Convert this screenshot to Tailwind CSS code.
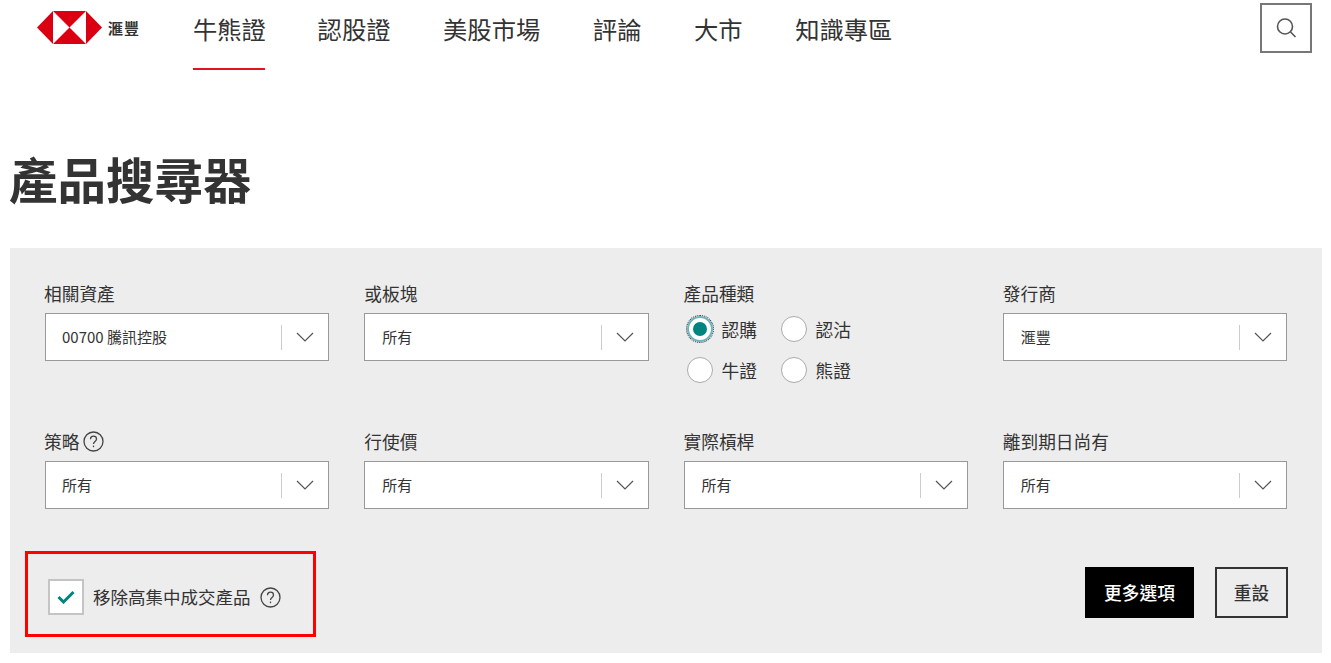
<!DOCTYPE html>
<html lang="zh-Hant">
<head>
  <meta charset="UTF-8" />
  <title>產品搜尋器</title>
  <script src="https://cdn.jsdelivr.net/npm/@tailwindcss/browser@4"></script>
</head>
<body class="bg-white text-[#333] overflow-hidden font-['Noto_Sans_CJK_TC','Liberation_Sans',sans-serif]">
  <!-- header -->
  <header class="h-[70px] flex items-start pl-[37px] pr-[19px]">
    <div class="w-[156px] h-[54px] flex items-center gap-[6px] shrink-0">
      <svg class="w-[65px] h-[33px]" viewBox="0 0 65 33">
        <polygon fill="#db0011" points="0,16.5 16,0 49,0 65,16.5 49,33 16,33" />
        <polygon fill="#fff" points="16,0 32.5,16.5 16,33" />
        <polygon fill="#fff" points="49,0 32.5,16.5 49,33" />
      </svg>
      <span class="text-[15px] font-bold leading-none tracking-[1px]">滙豐</span>
    </div>
    <nav class="flex gap-[52.6px] text-[24.3px] leading-[57px] h-[70px]">
      <a href="#" class="block h-[70px] w-[72px] border-b-2 border-[#e0141c] whitespace-nowrap">牛熊證</a>
      <a href="#" class="block whitespace-nowrap">認股證</a>
      <a href="#" class="block whitespace-nowrap">美股市場</a>
      <a href="#" class="block whitespace-nowrap">評論</a>
      <a href="#" class="block whitespace-nowrap">大市</a>
      <a href="#" class="block whitespace-nowrap">知識專區</a>
    </nav>
    <button class="ml-auto mt-[3px] w-[52px] h-[50px] border-2 border-[#777] flex items-center justify-center">
      <svg class="w-[24px] h-[24px]" viewBox="0 0 24 24" fill="none" stroke="#555" stroke-width="1.6">
        <circle cx="11" cy="10.5" r="7.5" />
        <path d="M16.5 16l5 5" />
      </svg>
    </button>
  </header>

  <h1 class="pl-[9px] mt-[72px] text-[48.5px] font-bold leading-[72px] h-[106px] text-[#333] whitespace-nowrap">產品搜尋器</h1>

  <!-- filter panel -->
  <section class="ml-[10px] w-[1312px] h-[405px] bg-[#ededed] pt-[32px]">
    <div class="grid grid-cols-4 gap-x-[35px] gap-y-[45px] mx-[35px] w-[1242px]">
      <div>
        <label class="block text-[17.7px] leading-[27px] -ml-px mb-[6px] h-[27px]">相關資產</label>
        <div class="h-[48px] bg-white border border-[#999] flex items-center pl-[16px] text-[15px]">
          <span class="flex-1">00700 騰訊控股</span>
          <span class="w-px h-[25px] bg-[#ccc]"></span>
          <svg class="w-[18px] h-[10px] mx-[14px]" viewBox="0 0 18 10" fill="none" stroke="#555" stroke-width="1.2"><path d="M1 1l8 8 8-8" /></svg>
        </div>
      </div>
      <div>
        <label class="block text-[17.7px] leading-[27px] mb-[6px] h-[27px]">或板塊</label>
        <div class="h-[48px] bg-white border border-[#999] flex items-center pl-[17px] text-[15px]">
          <span class="flex-1">所有</span>
          <span class="w-px h-[25px] bg-[#ccc]"></span>
          <svg class="w-[18px] h-[10px] mx-[14px]" viewBox="0 0 18 10" fill="none" stroke="#555" stroke-width="1.2"><path d="M1 1l8 8 8-8" /></svg>
        </div>
      </div>
      <div>
        <label class="block text-[17.7px] leading-[27px] mb-[6px] h-[27px]">產品種類</label>
        <div class="grid grid-cols-[94px_94px] gap-y-[15px] pt-[3px] text-[17.7px] leading-[26px]">
          <div class="flex items-center gap-[9px]">
            <span class="w-[26px] h-[26px] ml-[3px] rounded-full bg-white border-2 border-[#6fb3bf] outline-1 outline-dotted outline-[#333] flex items-center justify-center shrink-0">
              <span class="w-[14px] h-[14px] rounded-full bg-[#00847f]"></span>
            </span>
            <span>認購</span>
          </div>
          <div class="flex items-center gap-[9px]">
            <span class="w-[26px] h-[26px] ml-[3px] rounded-full bg-white border border-[#aaa] shrink-0"></span>
            <span>認沽</span>
          </div>
          <div class="flex items-center gap-[9px]">
            <span class="w-[26px] h-[26px] ml-[3px] rounded-full bg-white border border-[#aaa] shrink-0"></span>
            <span>牛證</span>
          </div>
          <div class="flex items-center gap-[9px]">
            <span class="w-[26px] h-[26px] ml-[3px] rounded-full bg-white border border-[#aaa] shrink-0"></span>
            <span>熊證</span>
          </div>
        </div>
      </div>
      <div>
        <label class="block text-[17.7px] leading-[27px] mb-[6px] h-[27px]">發行商</label>
        <div class="h-[48px] bg-white border border-[#999] flex items-center pl-[17px] text-[15px]">
          <span class="flex-1">滙豐</span>
          <span class="w-px h-[25px] bg-[#ccc]"></span>
          <svg class="w-[18px] h-[10px] mx-[14px]" viewBox="0 0 18 10" fill="none" stroke="#555" stroke-width="1.2"><path d="M1 1l8 8 8-8" /></svg>
        </div>
      </div>

      <div>
        <label class="flex items-center gap-[4px] text-[17.7px] leading-[27px] -ml-px mb-[6px] h-[27px]">策略
          <svg class="w-[21px] h-[21px]" viewBox="0 0 21 21" fill="none" stroke="#444" stroke-width="1.3"><circle cx="10.5" cy="10.5" r="9.5" /><path d="M7.5 8.2c0-1.8 1.3-3 3-3s3 1.1 3 2.8c0 2.4-3 2.5-3 5" /><path d="M10.5 14.6v1.6" /></svg>
        </label>
        <div class="h-[48px] bg-white border border-[#999] flex items-center pl-[16px] text-[15px]">
          <span class="flex-1">所有</span>
          <span class="w-px h-[25px] bg-[#ccc]"></span>
          <svg class="w-[18px] h-[10px] mx-[14px]" viewBox="0 0 18 10" fill="none" stroke="#555" stroke-width="1.2"><path d="M1 1l8 8 8-8" /></svg>
        </div>
      </div>
      <div>
        <label class="block text-[17.7px] leading-[27px] mb-[6px] h-[27px]">行使價</label>
        <div class="h-[48px] bg-white border border-[#999] flex items-center pl-[17px] text-[15px]">
          <span class="flex-1">所有</span>
          <span class="w-px h-[25px] bg-[#ccc]"></span>
          <svg class="w-[18px] h-[10px] mx-[14px]" viewBox="0 0 18 10" fill="none" stroke="#555" stroke-width="1.2"><path d="M1 1l8 8 8-8" /></svg>
        </div>
      </div>
      <div>
        <label class="block text-[17.7px] leading-[27px] mb-[6px] h-[27px]">實際槓桿</label>
        <div class="h-[48px] bg-white border border-[#999] flex items-center pl-[17px] text-[15px]">
          <span class="flex-1">所有</span>
          <span class="w-px h-[25px] bg-[#ccc]"></span>
          <svg class="w-[18px] h-[10px] mx-[14px]" viewBox="0 0 18 10" fill="none" stroke="#555" stroke-width="1.2"><path d="M1 1l8 8 8-8" /></svg>
        </div>
      </div>
      <div>
        <label class="block text-[17.7px] leading-[27px] mb-[6px] h-[27px]">離到期日尚有</label>
        <div class="h-[48px] bg-white border border-[#999] flex items-center pl-[17px] text-[15px]">
          <span class="flex-1">所有</span>
          <span class="w-px h-[25px] bg-[#ccc]"></span>
          <svg class="w-[18px] h-[10px] mx-[14px]" viewBox="0 0 18 10" fill="none" stroke="#555" stroke-width="1.2"><path d="M1 1l8 8 8-8" /></svg>
        </div>
      </div>
    </div>

    <!-- bottom row -->
    <div class="flex items-start justify-between mt-[42px] pl-[15px] pr-[34px]">
      <div class="w-[291px] h-[86px] border-[3px] border-[#f00] flex items-center pl-[20px] pt-[6px] gap-[9px]">
        <span class="w-[36px] h-[36px] bg-white border-2 border-[#c4c4c4] flex items-center justify-center shrink-0">
          <svg class="w-[18px] h-[14px]" viewBox="0 0 18 14" fill="none" stroke="#00847f" stroke-width="3"><path d="M1.5 7l5 5 10-10" /></svg>
        </span>
        <span class="text-[17.5px] whitespace-nowrap">移除高集中成交產品</span>
        <svg class="w-[21px] h-[21px] shrink-0" viewBox="0 0 21 21" fill="none" stroke="#444" stroke-width="1.3"><circle cx="10.5" cy="10.5" r="9.5" /><path d="M7.5 8.2c0-1.8 1.3-3 3-3s3 1.1 3 2.8c0 2.4-3 2.5-3 5" /><path d="M10.5 14.6v1.6" /></svg>
      </div>
      <div class="flex gap-[21px] mt-[16px]">
        <button class="w-[109px] h-[51px] bg-black text-white text-[17.7px] font-medium">更多選項</button>
        <button class="w-[73px] h-[51px] border-2 border-[#333] text-[17.7px] font-medium">重設</button>
      </div>
    </div>
  </section>
</body>
</html>
